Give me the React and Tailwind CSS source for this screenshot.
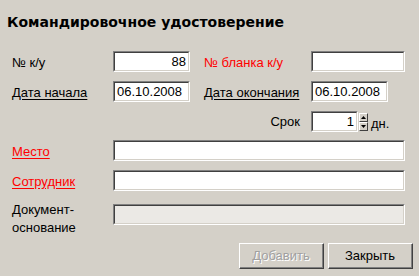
import React from 'react';

const Field = ({ width, value = '', align = 'left', disabled = false }) => (
    <div className={`${width} h-[21px] border-t border-l border-t-[#808080] border-l-[#808080] border-b border-r border-b-white border-r-white`}>
        <div
            className={`h-full border-t border-l border-t-[#404040] border-l-[#404040] border-b border-r border-b-[#d4d0c8] border-r-[#d4d0c8] px-[2px] flex items-center text-[13px] text-black leading-none ${disabled ? 'bg-[#ebe9e5]' : 'bg-white'} ${align === 'right' ? 'justify-end' : 'justify-start'}`}
        >
            {value}
        </div>
    </div>
);

const Label = ({ children, red = false, link = false, className = '' }) => (
    <span className={`text-[13px] leading-[15px] ${red ? 'text-[#ff0000]' : 'text-black'} ${link ? 'underline underline-offset-2' : ''} ${className}`}>
        {children}
    </span>
);

const WinButton = ({ children, disabled = false }) => (
    <div className="w-[85px] h-[26px] border-t border-l border-t-white border-l-white border-b border-r border-b-[#404040] border-r-[#404040]">
        <div className="h-full border-b border-r border-b-[#808080] border-r-[#808080] flex items-center justify-center text-[13px]">
            {disabled ? (
                <span className="text-[#a0a0a0] [text-shadow:1px_1px_0_#ffffff]">{children}</span>
            ) : (
                <span className="text-black">{children}</span>
            )}
        </div>
    </div>
);

const SpinButton = ({ up }) => (
    <div className="w-[9px] h-[9px] bg-[#d4d0c8] border-t border-l border-t-white border-l-white border-b border-r border-b-[#404040] border-r-[#404040] flex items-center justify-center">
        <svg width="5" height="3" viewBox="0 0 5 3">
            {up ? <polygon points="2.5,0 5,3 0,3" fill="#000" /> : <polygon points="0,0 5,0 2.5,3" fill="#000" />}
        </svg>
    </div>
);

export default function App() {
    return (
        <div className="w-[419px] h-[276px] bg-[#d4d0c8] overflow-hidden font-['Liberation_Sans',Arial,sans-serif]">
            <h1 className="pl-[7px] pt-[14px] text-[14px] leading-[17px] font-bold text-black font-['DejaVu_Sans',Verdana,sans-serif]">
                Командировочное удостоверение
            </h1>

            <div className="mt-[20px] flex flex-col">
                <div className="flex items-center h-[21px]">
                    <div className="w-[113px] pl-[12px]"><Label>№ к/у</Label></div>
                    <Field width="w-[77px]" value="88" align="right" />
                    <div className="w-[121px] pl-[14px]"><Label red>№ бланка к/у</Label></div>
                    <Field width="w-[94px]" />
                </div>

                <div className="mt-[9px] flex items-center h-[21px]">
                    <div className="w-[113px] pl-[12px]"><Label link>Дата начала</Label></div>
                    <Field width="w-[77px]" value="06.10.2008" />
                    <div className="w-[121px] pl-[14px]"><Label link>Дата окончания</Label></div>
                    <Field width="w-[77px]" value="06.10.2008" />
                </div>

                <div className="mt-[9px] flex items-center h-[21px]">
                    <div className="w-[311px] flex justify-end pr-[11px]"><Label>Срок</Label></div>
                    <Field width="w-[47px]" value="1" align="right" />
                    <div className="ml-[1px] flex flex-col">
                        <SpinButton up />
                        <SpinButton />
                    </div>
                    <Label className="ml-[3px] mt-[4px]">дн.</Label>
                </div>

                <div className="mt-[8px] flex items-center h-[21px]">
                    <div className="w-[113px] pl-[12px]"><Label red link>Место</Label></div>
                    <Field width="w-[292px]" />
                </div>

                <div className="mt-[9px] flex items-center h-[21px]">
                    <div className="w-[113px] pl-[12px]"><Label red link>Сотрудник</Label></div>
                    <Field width="w-[292px]" />
                </div>

                <div className="mt-[13px] flex items-start h-[21px]">
                    <div className="w-[113px] pl-[12px] -mt-[3px]">
                        <Label className="block leading-[18px]">Документ-<br />основание</Label>
                    </div>
                    <Field width="w-[292px]" disabled />
                </div>
            </div>

            <div className="mt-[18px] flex justify-end gap-[4px] pr-[6px]">
                <WinButton disabled>Добавить</WinButton>
                <WinButton>Закрыть</WinButton>
            </div>
        </div>
    );
}
